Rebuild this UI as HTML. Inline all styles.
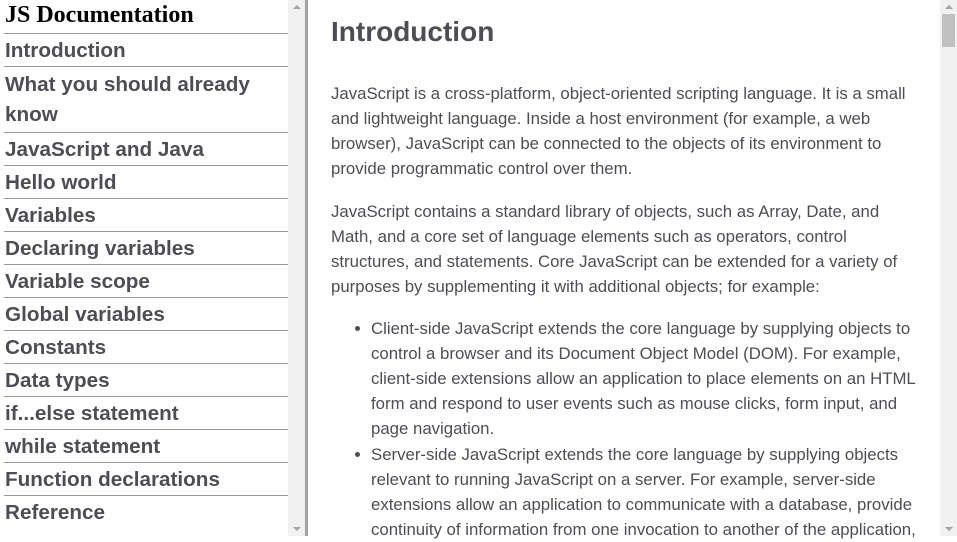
<!DOCTYPE html>
<html><head><meta charset="utf-8"><style>
*{margin:0;padding:0;box-sizing:border-box}
body{width:957px;height:536px;overflow:hidden;background:#fff;font-family:"Liberation Sans",Arial,sans-serif;color:#4d4e53;position:relative}
#nav{position:absolute;left:0;top:0;width:288px;height:536px;overflow:hidden}
#nav h2{font-family:"Liberation Serif",serif;font-weight:bold;font-size:24px;color:#000;height:33px;line-height:31px;padding-left:5px}
#nav .it{border-top:1px solid #999;margin-left:4px;padding-left:1px;font-weight:bold;font-size:20.7px;line-height:30px;padding-top:2px;height:33px;white-space:nowrap}
#nav .it.two{height:66px;padding-top:3px}
.sb{position:absolute;top:0;width:17px;height:536px;background:#f1f1f1}
.up,.dn{position:absolute;left:5px;width:0;height:0;border-left:4px solid transparent;border-right:4px solid transparent}
.up{top:5px;border-bottom:4px solid #a3a3a3}
.dn{bottom:5px;border-top:4px solid #a3a3a3}
#bar{position:absolute;left:305px;top:0;width:3px;height:536px;background:#a0a4a6}
#main{position:absolute;left:331px;top:0;width:600px;font-size:16.8px;white-space:nowrap}
#main h1{position:absolute;top:15px;left:0;font-size:28px;font-weight:bold;line-height:34px}
.l{position:absolute;left:0;line-height:25px}
.li{left:40px}
.bul{position:absolute;left:24px;width:5px;height:5px;border-radius:50%;background:#4d4e53}
</style></head><body>
<div id="nav">
<h2>JS Documentation</h2>
<div class="it">Introduction</div>
<div class="it two">What you should already<br>know</div>
<div class="it">JavaScript and Java</div>
<div class="it">Hello world</div>
<div class="it">Variables</div>
<div class="it">Declaring variables</div>
<div class="it">Variable scope</div>
<div class="it">Global variables</div>
<div class="it">Constants</div>
<div class="it">Data types</div>
<div class="it">if...else statement</div>
<div class="it">while statement</div>
<div class="it">Function declarations</div>
<div class="it">Reference</div>
</div>
<div class="sb" style="left:288px"><div class="up"></div><div class="dn"></div></div>
<div id="bar"></div>
<div id="main">
<h1>Introduction</h1>
<div class="l" style="top:81px">JavaScript is a cross-platform, object-oriented scripting language. It is a small</div>
<div class="l" style="top:106px">and lightweight language. Inside a host environment (for example, a web</div>
<div class="l" style="top:131px">browser), JavaScript can be connected to the objects of its environment to</div>
<div class="l" style="top:156px">provide programmatic control over them.</div>
<div class="l" style="top:199px">JavaScript contains a standard library of objects, such as Array, Date, and</div>
<div class="l" style="top:224px">Math, and a core set of language elements such as operators, control</div>
<div class="l" style="top:249px">structures, and statements. Core JavaScript can be extended for a variety of</div>
<div class="l" style="top:274px">purposes by supplementing it with additional objects; for example:</div>
<div class="bul" style="top:326px"></div>
<div class="l li" style="top:316px">Client-side JavaScript extends the core language by supplying objects to</div>
<div class="l li" style="top:341px">control a browser and its Document Object Model (DOM). For example,</div>
<div class="l li" style="top:366px">client-side extensions allow an application to place elements on an HTML</div>
<div class="l li" style="top:391px">form and respond to user events such as mouse clicks, form input, and</div>
<div class="l li" style="top:416px">page navigation.</div>
<div class="bul" style="top:452px"></div>
<div class="l li" style="top:442px">Server-side JavaScript extends the core language by supplying objects</div>
<div class="l li" style="top:467px">relevant to running JavaScript on a server. For example, server-side</div>
<div class="l li" style="top:492px">extensions allow an application to communicate with a database, provide</div>
<div class="l li" style="top:517px">continuity of information from one invocation to another of the application,</div>
</div>
<div class="sb" style="left:940px"><div class="up"></div><div class="dn"></div><div style="position:absolute;left:2px;top:14px;width:13px;height:33px;background:#c1c1c1"></div></div>
</body></html>
